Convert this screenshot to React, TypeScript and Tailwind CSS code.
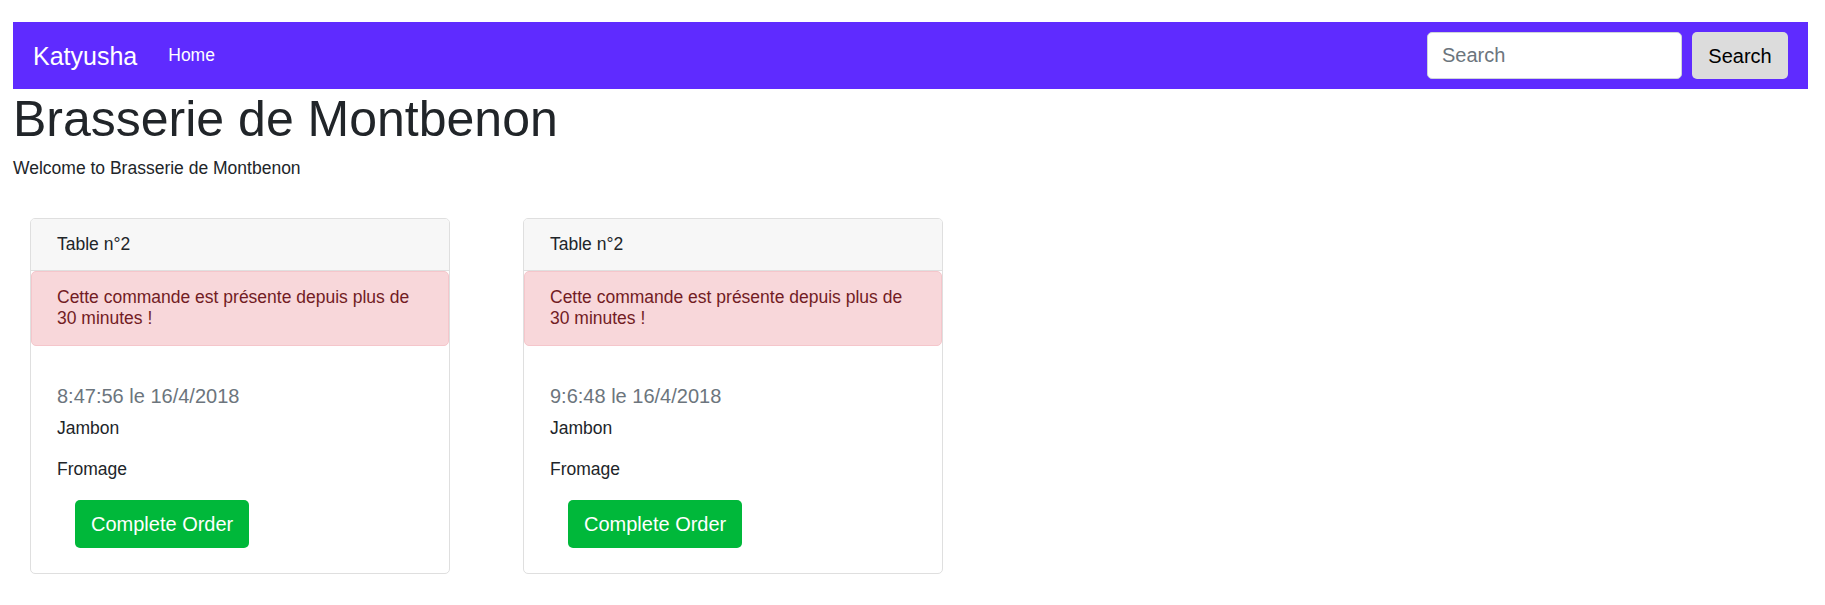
import React from "react";

type Order = {
  table: number;
  time: string;
  items: string[];
};

const orders: Order[] = [
  { table: 2, time: "8:47:56 le 16/4/2018", items: ["Jambon", "Fromage"] },
  { table: 2, time: "9:6:48 le 16/4/2018", items: ["Jambon", "Fromage"] },
];

const Navbar = () => (
  <nav className="h-[67px] bg-[#5f2bff] flex items-center pl-[20px] pr-[20px]">
    <span className="text-[25px] leading-[30px] text-white">Katyusha</span>
    <a className="ml-[31px] text-[17.5px] leading-[21px] text-white">Home</a>
    <div className="ml-auto flex items-center gap-[10px]">
      <input
        placeholder="Search"
        className="w-[255px] h-[47px] rounded-[5px] border border-[#ced4da] bg-white pl-[14px] text-[20px] text-[#495057] placeholder:text-[#6c757d] outline-none"
      />
      <button className="w-[96px] h-[47px] rounded-[5px] bg-[#dcdcdc] text-[20px] text-black">
        Search
      </button>
    </div>
  </nav>
);

// One card per pending order, with the late warning on top
const OrderCard = ({ order }: { order: Order }) => (
  <div className="w-[420px] border border-[#dfdfdf] rounded-[5px] overflow-hidden bg-white">
    <div className="bg-[#f7f7f7] border-b border-[#dfdfdf] px-[26px] pt-[15px] pb-[15px] leading-[21px]">
      Table n°{order.table}
    </div>
    <div className="border border-[#f5c6cb] rounded-[5px] bg-[#f8d7da] text-[#721c24] px-[25px] pt-[15px] pb-[16px] leading-[21px]">
      Cette commande est présente depuis plus de 30 minutes !
    </div>
    <div className="px-[26px] pt-[38px] pb-[25px]">
      <div className="text-[20px] leading-[24px] text-[#6c757d]">{order.time}</div>
      <div className="flex flex-col gap-[20px] mt-[10px] leading-[21px]">
        {order.items.map((item, i) => (
          <p key={i}>{item}</p>
        ))}
      </div>
      <button className="mt-[20px] ml-[18px] h-[48px] px-4 rounded-[5px] bg-[#00b83a] text-white text-[20px] leading-[30px]">
        Complete Order
      </button>
    </div>
  </div>
);

const App = () => {
  return (
    <div className="font-['Liberation_Sans',Arial,sans-serif] text-[17.5px] text-[#212529] ml-[13px] mr-[17px] pt-[22px] pb-[20px]">
      <Navbar />
      <h1 className="text-[50px] leading-[60px] font-normal">Brasserie de Montbenon</h1>
      <p className="mt-[9px] leading-[21px]">Welcome to Brasserie de Montbenon</p>
      <div className="flex gap-[73px] pl-[17px] mt-[39px]">
        {orders.map((order, i) => (
          <OrderCard key={i} order={order} />
        ))}
      </div>
    </div>
  );
};

export default App;
